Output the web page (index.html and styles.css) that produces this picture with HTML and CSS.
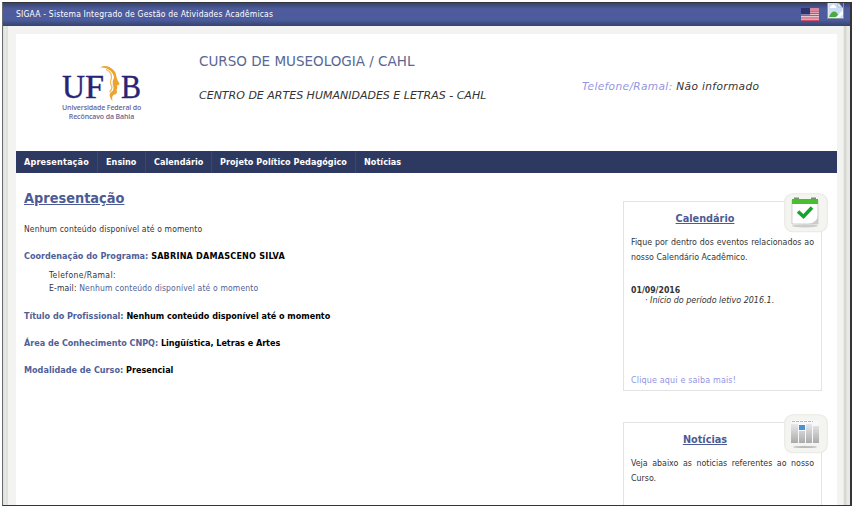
FILE: index.html
```
<!DOCTYPE html>
<html lang="pt-BR">
<head>
<meta charset="utf-8">
<title>SIGAA - Curso de Museologia</title>
<link rel="stylesheet" href="styles.css">
</head>
<body>
<div class="frame">
  <header class="topbar">
    <span class="system">SIGAA - Sistema Integrado de Gestão de Atividades Acadêmicas</span>
    <svg class="flag" viewBox="0 0 18 13"><rect width="18" height="13" fill="#e7c5d2"/><path d="M0 7.5H18M0 10H18M0 12.4H18M8 1H18M8 3.2H18M8 5.4H18" stroke="#ca4d65" stroke-width="1.2"/><rect width="9" height="6.5" fill="#2d3473"/></svg>
    <svg class="broken" viewBox="0 0 17 16"><path d="M.5 0V15.5H16.5V0" fill="#dfe8f1" stroke="#8592a6"/><path d="M2 0H11L15 4V14H2Z" fill="#c9def4"/><path d="M2 14Q5 7 9 9L13 14Z" fill="#4aab40"/><path d="M4 3q2-3 4 0q2 1 1 2H3q-1-1 1-2" fill="#fff"/><path d="M12 0L16 5V0Z" fill="#415292"/><path d="M11 0V4H15Z" fill="#f6f8fc" stroke="#8592a6" stroke-width=".5"/><path d="M16 7L8 15H12L16 11Z" fill="#fafcff"/></svg>
  </header>
  <div class="page">
    <div class="masthead">
      <div class="brand">
        <svg viewBox="0 0 80 60" role="img" aria-label="UFRB">
          <g class="letters"><text x="0" y="32.5" textLength="23" lengthAdjust="spacingAndGlyphs">U</text><text x="23" y="32.5" textLength="19" lengthAdjust="spacingAndGlyphs">F</text><text x="59" y="32.5" textLength="20" lengthAdjust="spacingAndGlyphs">B</text></g>
          <path d="M38 2.5Q44-.5 49 3Q54 6 54.500 12Q55 15 57.500 18.500Q57.500 20 55 20.500Q56 23 54.500 25Q56 28 53 29.500Q49 30 50.500 36Q46 31 48.500 27.500Q52 26 51.500 22Q49.500 17 52 13Q52 9 48 5.500Q44 2 38 2.500Z" fill="#eba431"/>
          <path d="M44 4.500Q50 7 49.500 13Q47.500 18 50 22Q50 25 47.500 27" fill="none" stroke="#efb65b" stroke-width="1.200"/>
        </svg>
        <div class="legend"><p class="l1">Universidade Federal do</p><p class="l2">Recôncavo da Bahia</p></div>
      </div>
      <div class="course"><h1>CURSO DE MUSEOLOGIA / CAHL</h1><p>CENTRO DE ARTES HUMANIDADES E LETRAS - CAHL</p></div>
      <p class="phone"><span>Telefone/Ramal:</span> Não informado</p>
    </div>
    <nav><a class="n1">Apresentação</a><a class="n2">Ensino</a><a class="n3">Calendário</a><a class="n4">Projeto Político Pedagógico</a><a class="n5">Notícias</a></nav>
    <div class="content">
      <main>
        <h2>Apresentação</h2>
        <p class="intro">Nenhum conteúdo disponível até o momento</p>
        <p class="field"><span>Coordenação do Programa:</span> <b class="person">SABRINA DAMASCENO SILVA</b></p>
        <div class="contact"><p class="tel">Telefone/Ramal:</p><p>E-mail: <span>Nenhum conteúdo disponível até o momento</span></p></div>
        <p class="field prof"><span>Título do Profissional:</span> <b>Nenhum conteúdo disponível até o momento</b></p>
        <p class="field area"><span>Área de Conhecimento CNPQ:</span> <b>Lingüística, Letras e Artes</b></p>
        <p class="field mode"><span>Modalidade de Curso:</span> <b>Presencial</b></p>
      </main>
      <aside>
        <section class="card calendar">
          <svg class="badge" viewBox="0 0 44 40"><rect x=".75" y=".75" width="42.5" height="38" rx="8" fill="#f4f4f0" stroke="#e9e9e4" stroke-width="1.2"/><ellipse cx="21" cy="33" rx="13" ry="1.5" fill="#ccc"/><path d="M8 7H34V31H8Z" fill="#fff" stroke="#bbb" stroke-width=".7"/><path d="M8 6H34V11H8Z" fill="#48bf2e"/><path d="M10 5.500h5M27 5.500h5" stroke="#6f9570" stroke-width="2"/><path d="M24 31Q33 30 34 22V31Z" fill="#ccc"/><path d="M14 18.500L19.500 23.500L28 14.500" fill="none" stroke="#16a52b" stroke-width="3.5"/></svg>
          <h3>Calendário</h3>
          <p class="desc">Fique por dentro dos eventos relacionados ao nosso Calendário Acadêmico.</p>
          <div class="event"><b>01/09/2016</b><p>· Início do período letivo 2016.1.</p></div>
          <a class="more">Clique aqui e saiba mais!</a>
        </section>
        <section class="card news">
          <svg class="badge" viewBox="0 0 44 40"><defs><linearGradient id="bar" x1="0" y1="0" x2="0" y2="1"><stop stop-color="#e8e8ea"/><stop offset="1" stop-color="#aaa"/></linearGradient></defs><rect x=".75" y=".75" width="42.5" height="38" rx="8" fill="#f4f4f0" stroke="#e9e9e4" stroke-width="1.2"/><path d="M7 6H35V29H7Z" fill="#f7f8fa"/><path d="M8 7.500H29" stroke="#b3bac2" stroke-width="1.2" stroke-dasharray="3 1"/><path d="M7 10h7v19h-7zM15 17h6v12h-6zM22 10h6v19h-6zM29 12h6v17h-6z" fill="url(#bar)"/><rect x="15" y="11" width="6" height="5" fill="#4b91d0"/><ellipse cx="21" cy="33" rx="12" ry="1" fill="#bbb"/></svg>
          <h3>Notícias</h3>
          <p class="desc">Veja abaixo as noticias referentes ao nosso Curso.</p>
        </section>
      </aside>
    </div>
  </div>
</div>
</body>
</html>
```
FILE: styles.css
```
* { box-sizing: border-box; }
html, body { margin: 0; height: 506px; overflow: hidden; background: #fff; }
body { padding: 2px 1px 0 2px; font-family: "DejaVu Sans Condensed", "DejaVu Sans", sans-serif; font-size: 8.5px; color: #333; }
h1, h2, h3, p { margin: 0; white-space: nowrap; }
.frame { height: 504px; border: 1px solid #34343a; border-left-color: #686d70; border-right-width: 2px; background: linear-gradient(90deg, #d9dcd6 0, #eeeeeb 3px, #cfd0cb 4px, #f3f3f2 5px, #f3f3f2 840px, #cfd0c8 842px, #e9e9e3 844px); overflow: hidden; }
.topbar { height: 23px; display: flex; align-items: flex-start; background: linear-gradient(#35436f, #4e5c9d 6px, #4c5b9b 17px, #34436f 23px); color: #fff; padding-left: 13px; }
.system { line-height: 22px; width: 787px; letter-spacing: .19px; }
.flag { width: 18px; height: 13px; margin: 5px 8px 0 -2px; }
.broken { width: 17px; height: 16px; }
.page { margin: 8px 13px 0; height: 480px; background: #fff; }
.masthead { height: 117px; display: flex; }
.brand { width: 183px; padding: 31px 0 0 46px; }
.brand svg { display: block; width: 80px; height: 60px; overflow: visible; }
.letters { font: 34px "Liberation Serif", serif; fill: #292375; stroke: #292375; stroke-width: .4px; }
.legend { width: 79px; margin-top: -22.5px; text-align: center; font: 600 7px/9.5px "Open Sans", sans-serif; color: #6c6596; }
.l1 { letter-spacing: -.12px; }
.l2 { letter-spacing: -.12px; }
.course { width: 383px; padding-top: 17px; font-family: "DejaVu Sans", sans-serif; }
h1 { font-size: 13.5px; font-weight: 400; line-height: 20px; color: #586795; }
.course p { margin-top: 16px; line-height: 18px; font-size: 11px; font-style: italic; }
.phone { padding-top: 42px; font: italic 10.6px/20px "DejaVu Sans", sans-serif; letter-spacing: .35px; }
.phone span, .more { color: #9296e1; }
nav { height: 22px; display: flex; background: #2d3960; color: #fff; font-weight: 700; line-height: 23px; font-size: 9px; letter-spacing: .04px; }
nav a { padding-left: 8px; border-right: 1px solid #3b466b; white-space: nowrap; }
.n1 { width: 82px; letter-spacing: .18px; }
.n2 { width: 48px; }
.n3 { width: 66px; }
.n4 { width: 144px; }
.n5 { border: 0; }
.content { display: flex; padding-left: 8px; }
main { width: 599px; padding-top: 15px; }
h2 { font: bold 14.4px/20px "DejaVu Sans Condensed", sans-serif; color: #4d5b94; text-decoration: underline; }
.intro { margin-top: 14px; line-height: 14px; letter-spacing: .13px; }
.field { margin-top: 13px; line-height: 14px; font-weight: 700; font-size: 9px; color: #000; }
.field span, .contact span { color: #505f98; }
.person { letter-spacing: .2px; }
.contact { padding: 6px 0 0 25px; line-height: 12.5px; letter-spacing: .15px; }
.tel { letter-spacing: .4px; }
.prof { margin-top: 15px; letter-spacing: -.03px; }
.area { letter-spacing: -.03px; }
aside { width: 199px; padding-top: 28px; }
.card { position: relative; width: 199px; height: 190px; border: 1px solid #e3e3e3; padding: 7px 7px 0; }
.badge { position: absolute; width: 44px; height: 40px; left: 160px; top: -9px; }
h3 { width: 148px; text-align: center; font: bold 10.8px/20px "DejaVu Sans Condensed", sans-serif; color: #4d5b94; text-decoration: underline; }
.desc { margin-top: 6px; line-height: 15px; white-space: normal; text-align: justify; font-size: 8.8px; }
.event { margin-top: 20px; line-height: 10px; }
.event b { font-size: 8.7px; }
.event p { font-style: italic; padding-left: 14px; font-size: 8.9px; }
.more { display: block; margin-top: 70px; font: 8px/12px "DejaVu Sans", sans-serif; letter-spacing: .16px; }
.news { margin-top: 31px; }
```
